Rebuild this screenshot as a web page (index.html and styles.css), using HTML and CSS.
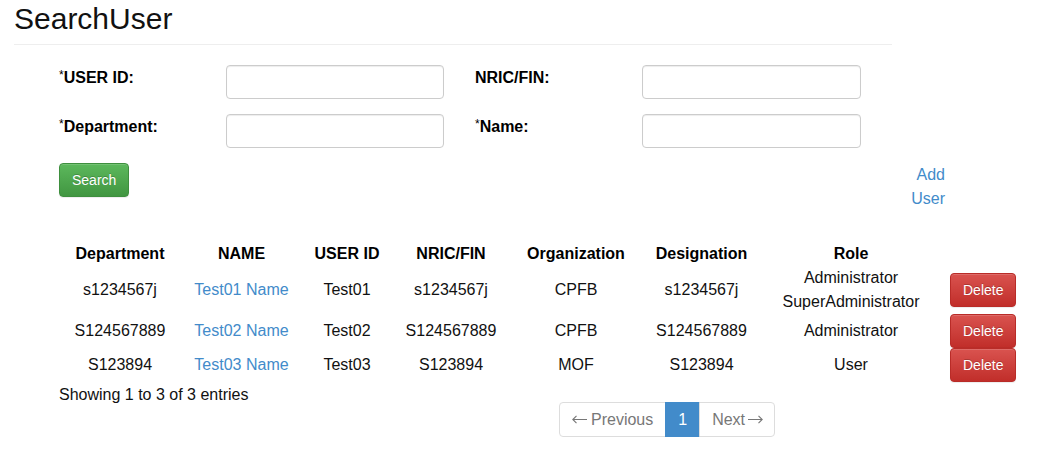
FILE: index.html
```html
<!DOCTYPE html>
<html lang="en">
<head>
<meta charset="utf-8">
<title>SearchUser</title>
<link rel="stylesheet" href="styles.css">
</head>
<body>
<div class="page-header">
  <h2 class="title">SearchUser</h2>
</div>
<div class="content">
  <form class="search-form">
    <label class="field-label"><span class="req">*</span>USER ID:</label>
    <input class="field-input" type="text">
    <label class="field-label second">NRIC/FIN:</label>
    <input class="field-input" type="text">
    <label class="field-label"><span class="req">*</span>Department:</label>
    <input class="field-input" type="text">
    <label class="field-label second"><span class="req">*</span>Name:</label>
    <input class="field-input" type="text">
  </form>
  <div class="actions">
    <button class="btn btn-success" type="button">Search</button>
    <a class="add-link" href="#">Add User</a>
  </div>
  <table class="users">
    <colgroup>
      <col class="c-dept"><col class="c-name"><col class="c-id"><col class="c-nric"><col class="c-org"><col class="c-des"><col class="c-role"><col class="c-act">
    </colgroup>
    <thead>
      <tr>
        <th>Department</th><th>NAME</th><th>USER ID</th><th>NRIC/FIN</th><th>Organization</th><th>Designation</th><th>Role</th><th></th>
      </tr>
    </thead>
    <tbody>
      <tr>
        <td>s1234567j</td><td><a href="#">Test01 Name</a></td><td>Test01</td><td>s1234567j</td><td>CPFB</td><td>s1234567j</td><td>Administrator<br>SuperAdministrator</td><td class="act"><button class="btn btn-danger" type="button">Delete</button></td>
      </tr>
      <tr>
        <td>S124567889</td><td><a href="#">Test02 Name</a></td><td>Test02</td><td>S124567889</td><td>CPFB</td><td>S124567889</td><td>Administrator</td><td class="act"><button class="btn btn-danger" type="button">Delete</button></td>
      </tr>
      <tr>
        <td>S123894</td><td><a href="#">Test03 Name</a></td><td>Test03</td><td>S123894</td><td>MOF</td><td>S123894</td><td>User</td><td class="act"><button class="btn btn-danger" type="button">Delete</button></td>
      </tr>
    </tbody>
  </table>
  <div class="table-footer">
    <div class="info">Showing 1 to 3 of 3 entries</div>
    <ul class="pagination">
      <li class="page disabled"><span class="page-link"><svg class="arrow arrow-left" width="15" height="9" viewBox="0 0 15 9" aria-hidden="true"><path d="M0.5 4.5H15M4.5 0.8L0.8 4.5L4.5 8.2"/></svg>Previous</span></li>
      <li class="page active"><span class="page-link">1</span></li>
      <li class="page disabled"><span class="page-link">Next<svg class="arrow arrow-right" width="15" height="9" viewBox="0 0 15 9" aria-hidden="true"><path d="M0 4.5H14.5M10.5 0.8L14.2 4.5L10.5 8.2"/></svg></span></li>
    </ul>
  </div>
</div>
</body>
</html>
```
FILE: styles.css
```css
* { box-sizing: border-box; }

body {
  margin: 0;
  background: #fff;
  color: #111;
  font-family: "Liberation Sans", Arial, sans-serif;
  font-size: 16px;
  line-height: 24px;
}

.page-header {
  width: 878px;
  margin-left: 14px;
  padding-top: 2px;
  padding-bottom: 9px;
  border-bottom: 1px solid #eee;
}

.title {
  margin: 0;
  font-size: 30px;
  line-height: 33px;
  font-weight: normal;
  color: #111;
}

.content {
  padding-left: 59px;
}

.search-form {
  margin: 20px 0 0;
  display: grid;
  grid-template-columns: 167px 218px 198px 219px;
  row-gap: 15px;
  align-items: start;
}

.field-label {
  font-weight: bold;
  font-size: 16px;
  line-height: 24px;
  padding-top: 1px;
  color: #000;
}

.field-label.second {
  padding-left: 31px;
}

.req {
  font-weight: normal;
  font-size: 12px;
  vertical-align: top;
  line-height: 18px;
}

.field-input {
  display: block;
  width: 100%;
  height: 34px;
  margin: 0;
  padding: 6px 12px;
  border: 1px solid #ccc;
  border-radius: 4px;
  background: #fff;
  box-shadow: inset 0 1px 1px rgba(0, 0, 0, .075);
  font-family: inherit;
  font-size: 14px;
}

.actions {
  margin-top: 15px;
  width: 886px;
  display: flex;
  justify-content: space-between;
  align-items: flex-start;
}

.btn {
  display: inline-block;
  height: 34px;
  padding: 6px 12px;
  border: 1px solid transparent;
  border-radius: 4px;
  font-family: inherit;
  font-size: 14px;
  line-height: 20px;
  color: #fff;
  text-shadow: 0 -1px 0 rgba(0, 0, 0, .2);
  box-shadow: inset 0 1px 0 rgba(255, 255, 255, .15), 0 1px 1px rgba(0, 0, 0, .075);
  cursor: pointer;
}

.btn-success {
  background-image: linear-gradient(to bottom, #5cb85c 0, #419641 100%);
  border-color: #3e8f3e;
}

.btn-danger {
  background-image: linear-gradient(to bottom, #d9534f 0, #c12e2a 100%);
  border-color: #b92c28;
}

a {
  color: #428bca;
  text-decoration: none;
}

.add-link {
  width: 40px;
  text-align: right;
  line-height: 24px;
}

.users {
  margin-top: 31px;
  border-collapse: collapse;
  table-layout: fixed;
  width: 967px;
}

.c-dept { width: 122px; }
.c-name { width: 121px; }
.c-id { width: 90px; }
.c-nric { width: 118px; }
.c-org { width: 132px; }
.c-des { width: 119px; }
.c-role { width: 180px; }
.c-act { width: 85px; }

.users th,
.users td {
  padding: 0;
  text-align: center;
  vertical-align: middle;
  line-height: 24px;
  white-space: nowrap;
}

.users th {
  font-weight: bold;
  color: #000;
}

.users td.act {
  text-align: left;
  padding-left: 9px;
}

.table-footer {
  display: grid;
  grid-template-columns: 500px auto;
  align-items: start;
}

.info {
  line-height: 24px;
  padding-top: 1px;
}

.pagination {
  list-style: none;
  margin: 20px 0 0;
  padding: 0;
  display: flex;
}

.page-link {
  display: flex;
  align-items: center;
  height: 35px;
  padding: 0 12px;
  font-size: 16px;
  line-height: 21px;
  border: 1px solid #ddd;
  margin-left: -1px;
  background: #fff;
  color: #777;
}

.arrow {
  display: block;
  fill: none;
  stroke: #777;
  stroke-width: 1.1;
}

.arrow-left { margin-right: 4px; }
.arrow-right { margin-left: 3px; }

.page:first-child .page-link {
  margin-left: 0;
  border-radius: 4px 0 0 4px;
}

.page:last-child .page-link {
  border-radius: 0 4px 4px 0;
  padding-right: 11px;
}

.page.active .page-link {
  background: #428bca;
  border-color: #428bca;
  color: #fff;
}
```
